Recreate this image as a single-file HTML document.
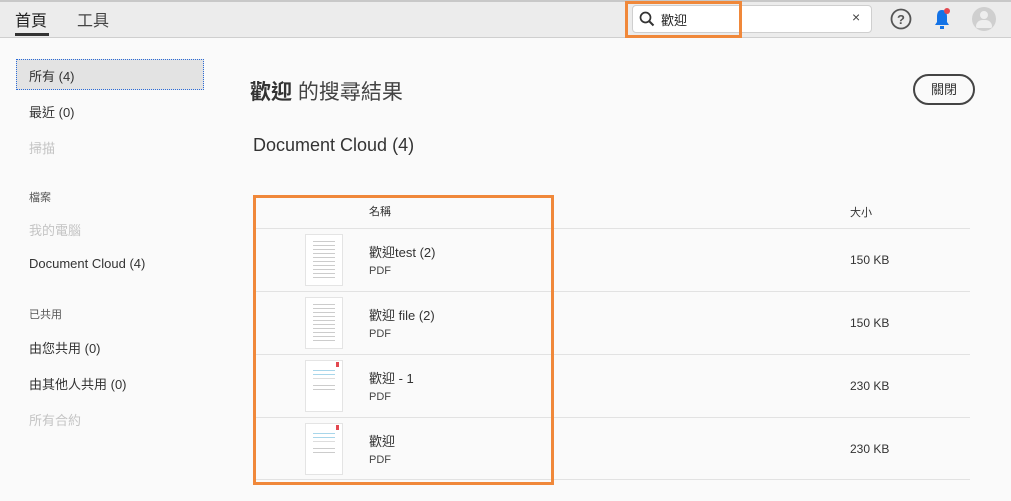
<!DOCTYPE html>
<html><head><meta charset="utf-8"><style>
*{margin:0;padding:0;box-sizing:border-box}
body{width:1011px;height:501px;overflow:hidden;background:#fafafa;font-family:"Liberation Sans","Noto Sans CJK TC",sans-serif;color:#333;position:relative}
.top{position:absolute;left:0;top:0;width:1011px;height:38px;background:#ececec;border-top:2px solid #c8c8c8;border-bottom:1px solid #cfcfcf}
.a{position:absolute}
.side div{position:absolute;left:29px;font-size:13px;color:#333}
.row{position:absolute;left:256px;width:714px;height:63px;border-top:1px solid #e2e2e2}
.th{position:absolute;left:49px;top:5px;width:38px;height:52px;background:#fff;border:1px solid #e4e4e4}
.nm{position:absolute;left:113px;top:13px;font-size:13px;color:#333}
.pf{position:absolute;left:113px;top:36px;font-size:11px;color:#444}
.sz{position:absolute;left:594px;top:24px;font-size:12px;color:#333}
.ln{height:1px;background:#ccc;margin:3px 7px 0 7px}
</style></head><body>
<div class="top"></div>
<div class="a" style="left:15px;top:7px;font-size:16px;color:#222">首頁</div>
<div class="a" style="left:15px;top:33px;width:34px;height:3px;background:#333"></div>
<div class="a" style="left:77px;top:7px;font-size:16px;color:#444">工具</div>
<div class="a" style="left:632px;top:5px;width:240px;height:28px;background:#fff;border:1px solid #cfcfcf;border-radius:4px"></div>
<svg class="a" style="left:639px;top:11px" width="16" height="16"><circle cx="6.5" cy="6.5" r="5" fill="none" stroke="#333" stroke-width="1.7"/><line x1="10" y1="10" x2="14.5" y2="14.5" stroke="#333" stroke-width="2"/></svg>
<div class="a" style="left:661px;top:10px;font-size:13px;color:#222">歡迎</div>
<div class="a" style="left:852px;top:9px;font-size:14px;color:#444">×</div>
<div class="a" style="left:625px;top:1px;width:117px;height:37px;border:3px solid #f0883a"></div>
<svg class="a" style="left:890px;top:8px" width="22" height="22"><circle cx="11" cy="11" r="9.5" fill="none" stroke="#555" stroke-width="1.8"/><text x="11" y="16" text-anchor="middle" font-size="13" font-family="Liberation Sans" fill="#555" font-weight="bold">?</text></svg>
<svg class="a" style="left:932px;top:7px" width="20" height="24"><path d="M10 3c-4 0-5 3-5 7v5l-2 3h14l-2-3v-5c0-4-1-7-5-7z" fill="#1473e6"/><rect x="8" y="19" width="4" height="3" fill="#1473e6"/><circle cx="15" cy="4" r="3" fill="#e34850"/></svg>
<div class="a" style="left:972px;top:7px;width:24px;height:24px;border-radius:50%;background:#cfcfcf"></div>
<div class="a" style="left:980px;top:11px;width:8px;height:8px;border-radius:50%;background:#eee"></div>
<div class="a" style="left:976px;top:20px;width:16px;height:8px;border-radius:8px 8px 2px 2px;background:#eee"></div>

<div class="a" style="left:16px;top:59px;width:188px;height:31px;background:#e3e3e3;border:1px dotted #2a6bd8"></div>
<div class="side">
<div style="top:66px">所有 (4)</div>
<div style="top:102px">最近 (0)</div>
<div style="top:138px;color:#c4c4c4">掃描</div>
<div style="top:189px;font-size:11px;color:#555">檔案</div>
<div style="top:220px;color:#c4c4c4">我的電腦</div>
<div style="top:256px">Document Cloud (4)</div>
<div style="top:306px;font-size:11px;color:#555">已共用</div>
<div style="top:338px">由您共用 (0)</div>
<div style="top:374px">由其他人共用 (0)</div>
<div style="top:410px;color:#c4c4c4">所有合約</div>
</div>

<div class="a" style="left:250px;top:76px;font-size:21px;color:#444"><b style="color:#333">歡迎</b> 的搜尋結果</div>
<div class="a" style="left:913px;top:74px;width:62px;height:31px;border:2px solid #444;border-radius:16px;font-size:13px;text-align:center;line-height:27px;color:#333">關閉</div>
<div class="a" style="left:253px;top:135px;font-size:18px;color:#333">Document Cloud (4)</div>
<div class="a" style="left:369px;top:203px;font-size:11px;color:#333">名稱</div>
<div class="a" style="left:850px;top:204px;font-size:11px;color:#333">大小</div>

<div class="row" style="top:228px"><div class="th"><div class="ln" style="margin-top:6px"></div><div class="ln"></div><div class="ln"></div><div class="ln"></div><div class="ln"></div><div class="ln"></div><div class="ln"></div><div class="ln"></div><div class="ln"></div><div class="ln"></div></div><div class="nm">歡迎test (2)</div><div class="pf">PDF</div><div class="sz">150 KB</div></div>
<div class="row" style="top:291px"><div class="th"><div class="ln" style="margin-top:6px"></div><div class="ln"></div><div class="ln"></div><div class="ln"></div><div class="ln"></div><div class="ln"></div><div class="ln"></div><div class="ln"></div><div class="ln"></div><div class="ln"></div></div><div class="nm">歡迎 file (2)</div><div class="pf">PDF</div><div class="sz">150 KB</div></div>
<div class="row" style="top:354px"><div class="th"><div class="a" style="right:3px;top:1px;width:3px;height:5px;background:#e34850"></div><div class="ln" style="margin-top:9px;background:#a8d6ea"></div><div class="ln" style="background:#a8d6ea"></div><div class="ln" style="background:#ddd"></div><div class="ln" style="margin-top:6px;background:#ccc"></div><div class="ln" style="background:#ccc"></div></div><div class="nm">歡迎 - 1</div><div class="pf">PDF</div><div class="sz">230 KB</div></div>
<div class="row" style="top:417px;border-bottom:1px solid #e2e2e2"><div class="th"><div class="a" style="right:3px;top:1px;width:3px;height:5px;background:#e34850"></div><div class="ln" style="margin-top:9px;background:#a8d6ea"></div><div class="ln" style="background:#a8d6ea"></div><div class="ln" style="background:#ddd"></div><div class="ln" style="margin-top:6px;background:#ccc"></div><div class="ln" style="background:#ccc"></div></div><div class="nm">歡迎</div><div class="pf">PDF</div><div class="sz">230 KB</div></div>

<div class="a" style="left:253px;top:195px;width:301px;height:290px;border:3px solid #f0883a"></div>
</body></html>
